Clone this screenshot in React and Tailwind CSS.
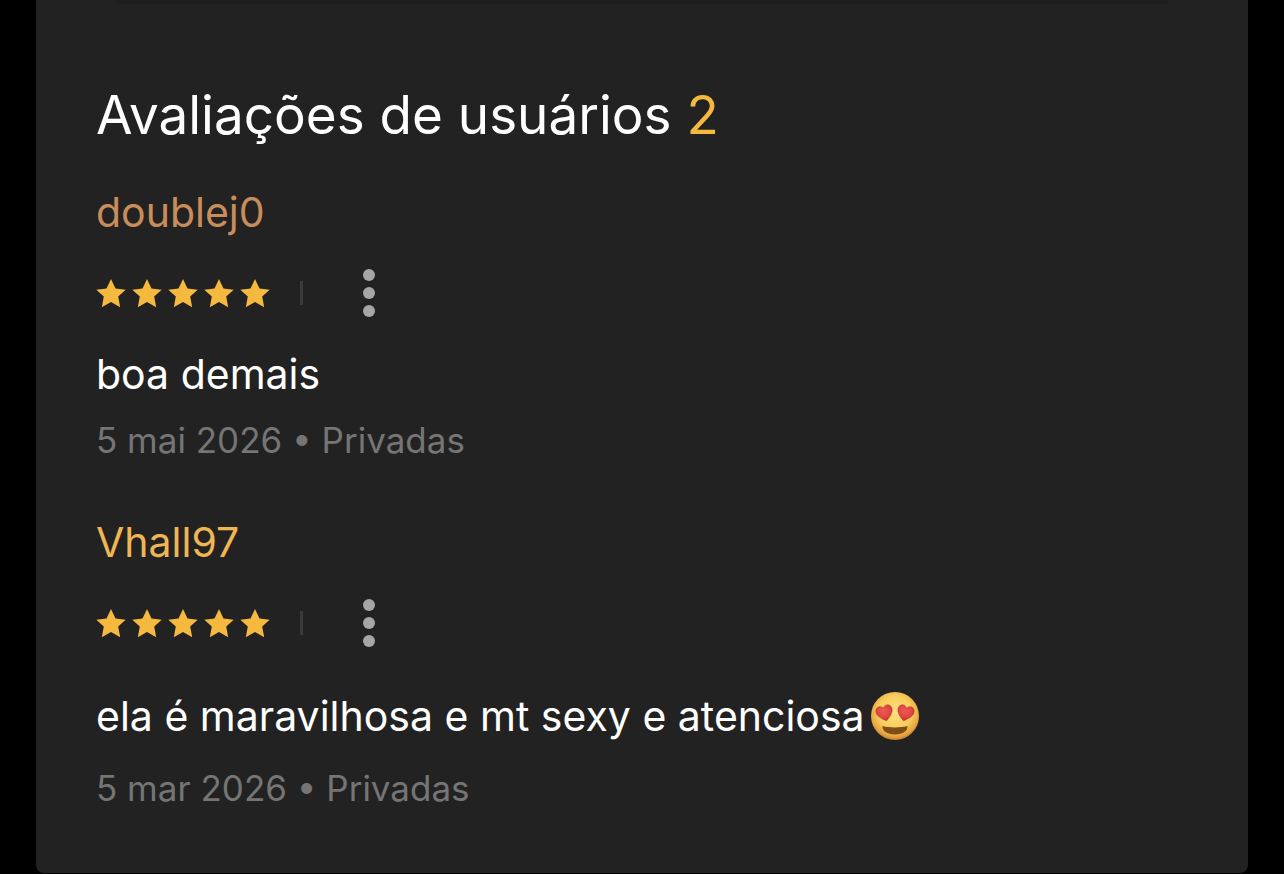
import React from "react";

const reviews = [
  {
    user: "doublej0",
    userColor: "text-[#c98d5b]",
    comment: "boa demais",
    love: false,
    date: "5 mai 2026",
  },
  {
    user: "Vhall97",
    userColor: "text-[#f0b653]",
    comment: "ela é maravilhosa e mt sexy e atenciosa",
    love: true,
    date: "5 mar 2026",
  },
];

function Star() {
  return (
    <svg viewBox="0 0 30 30" className="size-[30px] fill-[#f6b93f]" aria-hidden="true">
      <path d="M15 .9 19.5 10.6 29.7 11.7 22.2 18.6 24.2 29.2 15 24 5.8 29.2 7.8 18.6.3 11.7 10.5 10.6Z" />
    </svg>
  );
}

function HeartEyes() {
  const heart =
    "M0 8.2C-3.8 5.4-7.6 2.2-7.6-1.6-7.6-4.4-5.7-6-3.6-6-1.9-6-.6-5 0-3.5.6-5 1.9-6 3.6-6 5.7-6 7.6-4.4 7.6-1.6 7.6 2.2 3.8 5.4 0 8.2Z";
  return (
    <svg
      viewBox="0 0 48 48"
      role="img"
      aria-label="😍"
      className="ml-1.5 inline-block size-12 align-[-9px]"
    >
      <defs>
        <radialGradient id="face" cx="0.5" cy="0.42" r="0.58">
          <stop offset="0" stopColor="#ffe07e" />
          <stop offset="0.6" stopColor="#f8cd5c" />
          <stop offset="0.87" stopColor="#e6a541" />
          <stop offset="1" stopColor="#c9802a" />
        </radialGradient>
        <radialGradient id="heart" cx="0.45" cy="0.35" r="0.65">
          <stop offset="0" stopColor="#ee5a52" />
          <stop offset="0.65" stopColor="#e04543" />
          <stop offset="1" stopColor="#b52c30" />
        </radialGradient>
      </defs>
      <circle cx="24" cy="24" r="24" fill="url(#face)" />
      <g fill="url(#heart)" stroke="#b3392c" strokeWidth="0.5">
        <path d={heart} transform="translate(13.4 20.2) rotate(-14) scale(1.08)" />
        <path d={heart} transform="translate(34.6 20.2) rotate(14) scale(1.08)" />
      </g>
      <path
        d="M11.6 34C15 35 19.4 35.4 24 35.4s9-.4 12.4-1.4C37.2 38.5 31.8 42.4 24 42.4S10.8 38.5 11.6 34Z"
        fill="#7d4f17"
      />
    </svg>
  );
}

function Review({ review }) {
  return (
    <article>
      <h3 className={`text-[41px] leading-[60px] ${review.userColor}`}>{review.user}</h3>
      <div className="flex items-center py-[15px]">
        <div className="flex gap-1.5" role="img" aria-label="5">
          <Star />
          <Star />
          <Star />
          <Star />
          <Star />
        </div>
        <div className="ml-[30px] h-6 w-[3px] bg-[#3b3b3b]" />
        <button
          type="button"
          aria-label="Mais opções"
          className="ml-[30px] flex size-[72px] items-center justify-center"
        >
          <svg viewBox="0 0 12 48" className="h-12 w-3 fill-[#a6a6a6]" aria-hidden="true">
            <circle cx="6" cy="6" r="6" />
            <circle cx="6" cy="24" r="6" />
            <circle cx="6" cy="42" r="6" />
          </svg>
        </button>
      </div>
      <p className={`text-[41px] leading-[60px] text-white ${review.love ? "pt-3 pb-1.5" : ""}`}>
        {review.comment}
        {review.love && <HeartEyes />}
      </p>
      <p className="mt-3 text-[35px] leading-[48px] text-[#757575]">{review.date} • Privadas</p>
    </article>
  );
}

export default function App() {
  return (
    <div className="min-h-screen bg-black px-9 font-['Inter',sans-serif]">
      <main className="rounded-b-lg bg-[#222222] px-[60px] pb-[61px]">
        <div className="mx-5 h-1 rounded-b-xs bg-[#1e1e1e]" />
        <h2 className="pt-[75px] text-[53px] leading-[72px] text-white">
          Avaliações de usuários <span className="text-[#f6b93f]">2</span>
        </h2>
        <div className="mt-[31px] flex flex-col gap-12">
          {reviews.map((review) => (
            <Review key={review.user} review={review} />
          ))}
        </div>
      </main>
    </div>
  );
}
